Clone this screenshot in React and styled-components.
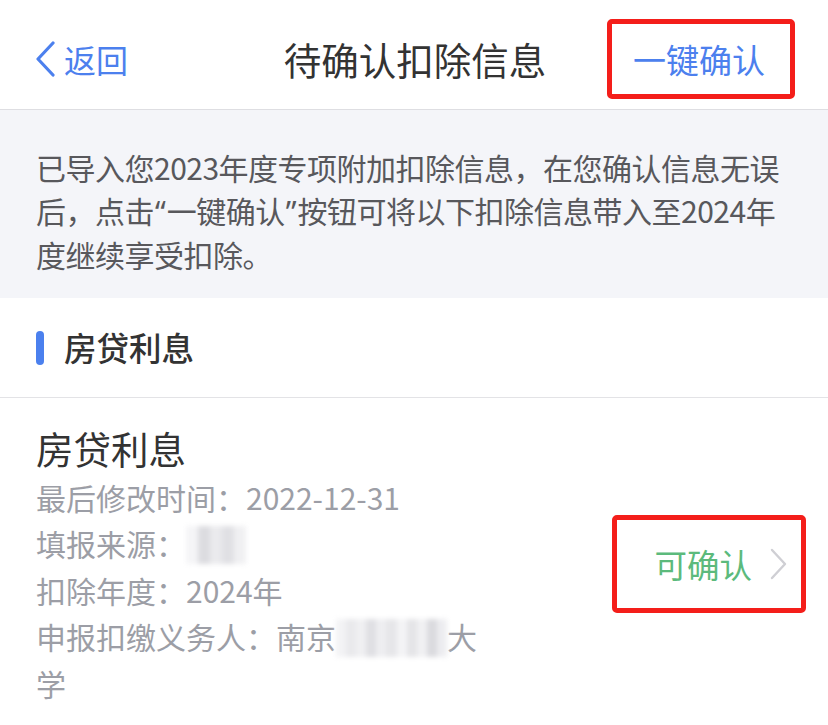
import React from "react";
import styled, { createGlobalStyle } from "styled-components";

const Global = createGlobalStyle`
  html, body { margin: 0; padding: 0; background: #fff; }
  body { font-family: "Noto Sans CJK SC", "Noto Sans", sans-serif; }
  * { box-sizing: border-box; }
`;

const Page = styled.div`
  width: 828px;
  min-height: 725px;
  background: #fff;
  overflow: hidden;
`;

const NavBar = styled.header`
  height: 110px;
  display: grid;
  grid-template-columns: 1fr auto 1fr;
  align-items: center;
  padding: 9px 33px 0 35px;
  border-bottom: 1px solid #dedee2;
`;

const BackButton = styled.div`
  display: flex;
  align-items: center;
  gap: 8px;
  color: #4c80ee;
  font-size: 32px;
  line-height: 1;
  justify-self: start;
`;

const Title = styled.h1`
  margin: 0;
  font-size: 37.5px;
  font-weight: 400;
  color: #333;
  line-height: 1;
`;

const Highlight = styled.div`
  border: 5px solid #f41e1a;
  border-radius: 5px;
  display: flex;
  align-items: center;
  padding: ${(p) => p.$pad};
  height: ${(p) => p.$h};
  justify-self: end;
`;

const NavAction = styled.span`
  color: #4c80ee;
  font-size: 33px;
  line-height: 1;
`;

const Notice = styled.p`
  margin: 0;
  background: #f4f5f9;
  padding: 36px 36px 22px 36px;
  font-size: 30px;
  letter-spacing: -0.5px;
  line-height: 43px;
  color: #58585c;
`;

const Quote = styled.span`
  font-family: "Noto Sans", sans-serif;
  letter-spacing: 0;
  padding: 0 1px;
`;

const SectionHead = styled.div`
  height: 100px;
  display: flex;
  align-items: center;
  gap: 20px;
  padding-left: 36px;
  border-bottom: 1px solid #e3e3e6;
`;

const Bar = styled.span`
  width: 8px;
  height: 34px;
  border-radius: 4px;
  background: #4b80ee;
`;

const SectionTitle = styled.h2`
  margin: 0;
  font-size: 32.5px;
  font-weight: 500;
  color: #333;
  line-height: 1;
`;

const Card = styled.div`
  display: flex;
  align-items: center;
  justify-content: space-between;
  padding: 24px 22px 20px 36px;
`;

const CardBody = styled.div`
  display: flex;
  flex-direction: column;
`;

const CardTitle = styled.div`
  font-size: 37.5px;
  line-height: 52px;
  color: #333;
`;

const Detail = styled.div`
  font-size: 30px;
  line-height: 46px;
  color: #9c9ea6;
  max-width: 446px;
`;

const Mosaic = styled.span`
  display: inline-flex;
  vertical-align: middle;
  width: ${(p) => p.$w}px;
  height: 38px;
  filter: blur(2.5px);
  position: relative;
  top: -3px;
`;

const Cell = styled.span`
  flex: 1;
  background: ${(p) => p.$c};
`;

const Status = styled.div`
  display: flex;
  align-items: center;
  gap: 18px;
`;

const StatusText = styled.span`
  font-size: 32.5px;
  color: #5cba7c;
  line-height: 1;
`;

const mosaicA = ["#f5f5f7", "#dcdce0", "#eaeaed", "#e0e0e4", "#f0f0f2"];
const mosaicB = [
  "#f3f3f5", "#e9e9ec", "#f0f0f2", "#dfdfe3", "#eeeef1", "#e6e6e9",
  "#f4f4f6", "#e4e4e7", "#f1f1f3", "#dadade", "#ededf0",
];

export default function App() {
  return (
    <Page>
      <Global />
      <NavBar>
        <BackButton>
          <svg width="21" height="36" viewBox="0 0 21 36">
            <polyline points="18,2 3,18 18,34" fill="none" stroke="#4c80ee" strokeWidth="3.2" strokeLinecap="round" strokeLinejoin="round" />
          </svg>
          返回
        </BackButton>
        <Title>待确认扣除信息</Title>
        <Highlight $pad="0 25px 0 21px" $h="80px">
          <NavAction>一键确认</NavAction>
        </Highlight>
      </NavBar>
      <Notice>
        已导入您2023年度专项附加扣除信息，在您确认信息无误后，点击<Quote>“</Quote>一键确认<Quote>”</Quote>按钮可将以下扣除信息带入至2024年度继续享受扣除。
      </Notice>
      <SectionHead>
        <Bar />
        <SectionTitle>房贷利息</SectionTitle>
      </SectionHead>
      <Card>
        <CardBody>
          <CardTitle>房贷利息</CardTitle>
          <Detail>最后修改时间：2022-12-31</Detail>
          <Detail>
            填报来源：
            <Mosaic $w={60}>
              {mosaicA.map((c, i) => (
                <Cell key={i} $c={c} />
              ))}
            </Mosaic>
          </Detail>
          <Detail>扣除年度：2024年</Detail>
          <Detail>
            申报扣缴义务人：南京
            <Mosaic $w={111}>
              {mosaicB.map((c, i) => (
                <Cell key={i} $c={c} />
              ))}
            </Mosaic>
            大学
          </Detail>
        </CardBody>
        <Highlight $pad="0 14px 0 37px" $h="98px">
          <Status>
            <StatusText>可确认</StatusText>
            <svg width="17" height="32" viewBox="0 0 17 32">
              <polyline points="2,2 15,16 2,30" fill="none" stroke="#cfcfd4" strokeWidth="2.4" strokeLinecap="round" strokeLinejoin="round" />
            </svg>
          </Status>
        </Highlight>
      </Card>
    </Page>
  );
}
